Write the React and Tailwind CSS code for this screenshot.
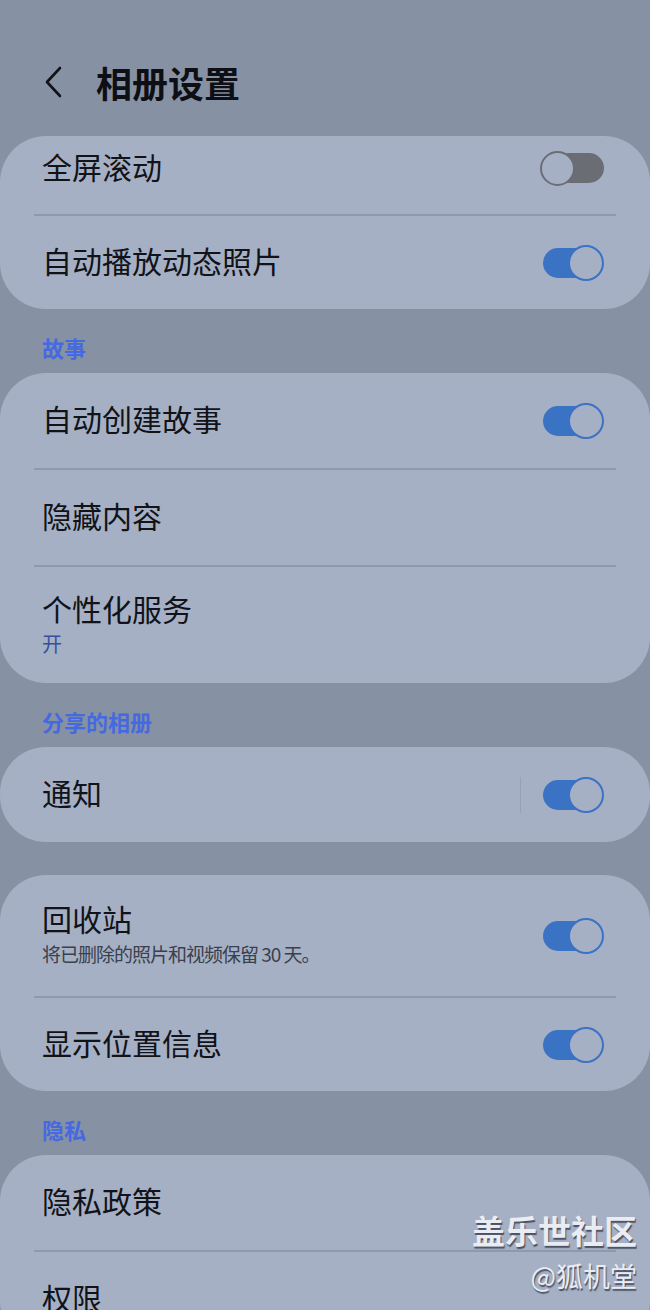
import React from "react";

const font = { fontFamily: '"Noto Sans CJK SC", "Noto Sans", sans-serif' };

function Toggle({ on }) {
  if (on) {
    return (
      <div className="relative w-[62px] h-[36px] flex items-center shrink-0">
        <div className="absolute left-[1px] w-[50px] h-[30px] rounded-full bg-[#3a73c3]" />
        <div className="absolute right-0 w-[36px] h-[36px] rounded-full bg-[#a6b0c5] border-2 border-[#3a73c3]" />
      </div>
    );
  }
  return (
    <div className="relative w-[64px] h-[36px] flex items-center shrink-0">
      <div className="absolute right-0 w-[50px] h-[30px] rounded-full bg-[#6a6d73]" />
      <div className="absolute left-0 w-[35px] h-[35px] rounded-full bg-[#a6b0c5] border-2 border-[#6a6d73]" />
    </div>
  );
}

function Divider() {
  return <div className="mx-[34px] h-[2px] bg-[#8f99ad]" />;
}

function Row({ title, sub, subBlue, toggle, sep, h = "h-[95px]" }) {
  return (
    <div className={`flex items-center justify-between pl-[42px] pr-[46px] ${h}`}>
      <div className="flex flex-col pb-[5px]">
        <span className="text-[30px] leading-[42px] text-[#111318]">{title}</span>
        {sub && (
          <span
            className={
              subBlue
                ? "text-[20px] leading-[30px] text-[#34509e]"
                : "text-[19px] leading-[30px] tracking-[-1px] text-[#3a404c]"
            }
          >
            {sub}
          </span>
        )}
      </div>
      {toggle !== undefined && (
        <div className="flex items-center">
          {sep && <div className="w-[1px] h-[36px] bg-[#97a1b5] mr-[21px]" />}
          <Toggle on={toggle} />
        </div>
      )}
    </div>
  );
}

function Section({ children }) {
  return (
    <div className="pl-[42px] h-[64px] pt-[23px] text-[22px] leading-[30px] font-bold text-[#4569e0]">
      {children}
    </div>
  );
}

function Card({ children, className = "" }) {
  return <div className={`bg-[#a6b0c5] rounded-[46px] ${className}`}>{children}</div>;
}

export default function App() {
  return (
    <div className="relative w-[650px] h-[1310px] overflow-hidden bg-[#8791a4]" style={font}>
      {/* Header */}
      <div className="h-[136px] flex items-start pt-[59px] pl-[40px]">
        <svg width="26" height="40" viewBox="0 0 26 40" className="mt-[3px]">
          <path d="M20 6 L7 20 L20 34" fill="none" stroke="#111318" strokeWidth="2.6" strokeLinecap="round" strokeLinejoin="round" />
        </svg>
        <h1 className="ml-[30px] text-[36px] leading-[46px] font-bold text-[#0d0f14]">相册设置</h1>
      </div>

      <Card>
        <Row title="全屏滚动" toggle={false} h="h-[78px] pb-[14px]" />
        <Divider />
        <Row title="自动播放动态照片" toggle={true} h="h-[93px]" />
      </Card>

      <Section>故事</Section>
      <Card>
        <Row title="自动创建故事" toggle={true} />
        <Divider />
        <Row title="隐藏内容" />
        <Divider />
        <Row title="个性化服务" sub="开" subBlue h="h-[116px]" />
      </Card>

      <Section>分享的相册</Section>
      <Card>
        <Row title="通知" toggle={true} sep />
      </Card>

      <div className="h-[33px]" />
      <Card>
        <Row title="回收站" sub="将已删除的照片和视频保留 30 天。" toggle={true} h="h-[121px]" />
        <Divider />
        <Row title="显示位置信息" toggle={true} h="h-[93px]" />
      </Card>

      <Section>隐私</Section>
      <Card>
        <Row title="隐私政策" />
        <Divider />
        <Row title="权限" />
      </Card>

      {/* Watermark */}
      <div className="absolute right-[13px] top-[1208px] flex flex-col items-end text-[#e9ecf2] [text-shadow:1px_2px_1px_#4b5263]">
        <span className="text-[33px] leading-[44px] font-bold">盖乐世社区</span>
        <span className="text-[27px] leading-[40px] mt-[4px]">@狐机堂</span>
      </div>
    </div>
  );
}
